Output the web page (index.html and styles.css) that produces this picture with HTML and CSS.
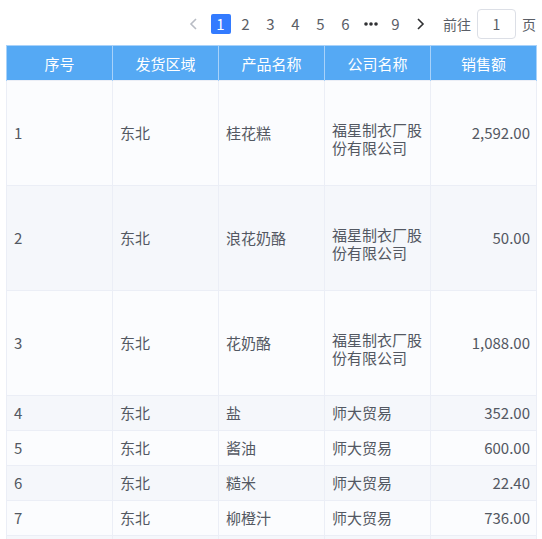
FILE: index.html
```html
<!DOCTYPE html>
<html lang="zh">
<head>
<meta charset="utf-8">
<link rel="stylesheet" href="styles.css">
</head>
<body>
<div class="page">
  <div class="pager">
    <span class="arrow disabled"><svg width="10" height="12" viewBox="0 0 10 12"><path d="M7 1 L2 6 L7 11" fill="none" stroke="currentColor" stroke-width="1.6"/></svg></span>
    <span class="num active">1</span>
    <span class="num">2</span>
    <span class="num">3</span>
    <span class="num">4</span>
    <span class="num">5</span>
    <span class="num">6</span>
    <span class="num more"><svg width="16" height="6" viewBox="0 0 16 6"><circle cx="3" cy="3" r="1.8" fill="currentColor"/><circle cx="8" cy="3" r="1.8" fill="currentColor"/><circle cx="13" cy="3" r="1.8" fill="currentColor"/></svg></span>
    <span class="num">9</span>
    <span class="arrow"><svg width="10" height="12" viewBox="0 0 10 12"><path d="M3 1 L8 6 L3 11" fill="none" stroke="currentColor" stroke-width="1.6"/></svg></span>
    <span class="jump">前往</span>
    <span class="input">1</span>
    <span class="unit">页</span>
  </div>
  <table class="grid">
    <colgroup><col><col><col><col><col></colgroup>
    <thead>
      <tr><th>序号</th><th>发货区域</th><th>产品名称</th><th>公司名称</th><th>销售额</th></tr>
    </thead>
    <tbody>
      <tr class="tall"><td>1</td><td>东北</td><td>桂花糕</td><td class="wrap">福星制衣厂股份有限公司</td><td class="num-cell">2,592.00</td></tr>
      <tr class="tall even"><td>2</td><td>东北</td><td>浪花奶酪</td><td class="wrap">福星制衣厂股份有限公司</td><td class="num-cell">50.00</td></tr>
      <tr class="tall"><td>3</td><td>东北</td><td>花奶酪</td><td class="wrap">福星制衣厂股份有限公司</td><td class="num-cell">1,088.00</td></tr>
      <tr class="even"><td>4</td><td>东北</td><td>盐</td><td>师大贸易</td><td class="num-cell">352.00</td></tr>
      <tr><td>5</td><td>东北</td><td>酱油</td><td>师大贸易</td><td class="num-cell">600.00</td></tr>
      <tr class="even"><td>6</td><td>东北</td><td>糙米</td><td>师大贸易</td><td class="num-cell">22.40</td></tr>
      <tr><td>7</td><td>东北</td><td>柳橙汁</td><td>师大贸易</td><td class="num-cell">736.00</td></tr>
      <tr class="even blank"><td></td><td></td><td></td><td></td><td></td></tr>
    </tbody>
  </table>
</div>
</body>
</html>
```

FILE: styles.css
```css
html, body {
  margin: 0;
  padding: 0;
  background: #ffffff;
  overflow: hidden;
}
body {
  font-family: "Noto Sans CJK SC", "Noto Sans", sans-serif;
  font-size: 15px;
  color: #535862;
  width: 542px;
  height: 539px;
}
.page {
  padding: 9px 6px 0 6px;
}
.pager {
  display: flex;
  align-items: center;
  justify-content: flex-end;
  height: 30px;
  margin-bottom: 6px;
  color: #5a5e66;
}
.arrow {
  width: 20px;
  height: 20px;
  display: flex;
  align-items: center;
  justify-content: center;
  color: #303133;
  margin: 0 2px;
}
.arrow.disabled {
  color: #b8bcc4;
  margin-right: 4px;
}
.num {
  width: 20px;
  height: 20px;
  line-height: 20px;
  text-align: center;
  margin: 0 2.5px;
  font-size: 15px;
  border-radius: 2px;
}
.num.active {
  background: #337bff;
  color: #ffffff;
}
.num.more {
  display: flex;
  align-items: center;
  justify-content: center;
  color: #303133;
}
.jump {
  margin-left: 11px;
  margin-right: 6px;
  font-size: 14px;
}
.input {
  width: 37px;
  height: 28px;
  line-height: 28px;
  border: 1px solid #dcdfe6;
  border-radius: 4px;
  text-align: center;
  font-size: 14px;
}
.unit {
  margin-left: 6px;
  font-size: 14px;
}
.grid {
  width: 530px;
  table-layout: fixed;
  border-collapse: collapse;
}
.grid col {
  width: 106px;
}
.grid th {
  background: #55a9f4;
  color: #ffffff;
  font-weight: normal;
  height: 34px;
  padding: 0;
  border-left: 1px solid #a8d2fa;
  border-right: 1px solid #a8d2fa;
  border-top: 1px solid #a8d2fa;
  text-align: center;
  font-size: 15px;
}
.grid td {
  height: 34px;
  padding: 0 6px 0 7px;
  border: 1px solid #ebeef6;
  background: #fbfcfe;
  line-height: 18px;
  vertical-align: middle;
}
.grid tr.even td {
  background: #f5f7fb;
}
.grid tr.tall td {
  height: 104px;
}
.grid tr.tall td.wrap {
  padding-top: 12px;
  height: 92px;
}
.grid td.num-cell {
  text-align: right;
}
```
